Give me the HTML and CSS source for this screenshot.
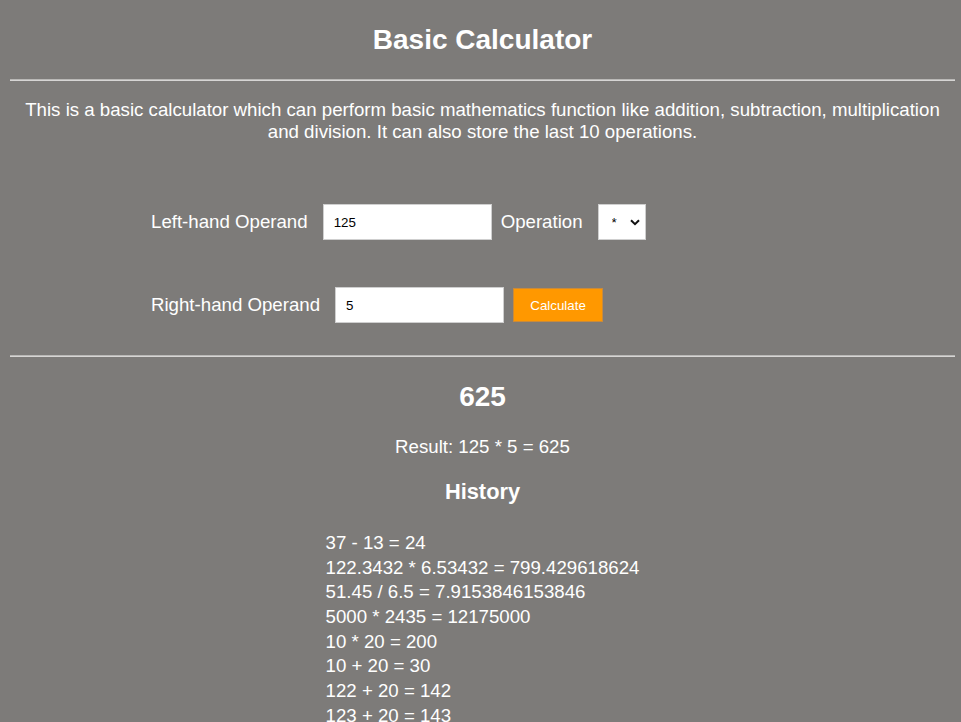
FILE: index.html
```html
<!DOCTYPE html>
<html>
<head>
<meta charset="utf-8">
<title>Basic Calculator</title>
<link rel="stylesheet" href="styles.css">
</head>
<body>
<h1 class="title">Basic Calculator</h1>
<hr class="rule">
<p class="intro">This is a basic calculator which can perform basic mathematics function like addition, subtraction, multiplication and division. It can also store the last 10 operations.</p>
<form class="calc">
  <div class="row row-first">
    <label class="lbl lbl-left">Left-hand Operand</label>
    <input class="field" type="text" value="125">
    <label class="lbl lbl-op">Operation</label>
    <span class="select-wrap">
      <select class="op"><option>*</option></select>
      <svg class="chev" width="10" height="7" viewBox="0 0 10 7"><path d="M1 1.2 L5 5.2 L9 1.2" fill="none" stroke="#111" stroke-width="2"/></svg>
    </span>
  </div>
  <div class="row row-second">
    <label class="lbl lbl-right">Right-hand Operand</label>
    <input class="field" type="text" value="5">
    <button class="btn" type="button">Calculate</button>
  </div>
</form>
<hr class="rule">
<div class="output">
  <h2 class="answer">625</h2>
  <p class="result">Result: 125 * 5 = 625</p>
  <h3 class="hist-title">History</h3>
  <ul class="history">
    <li>37 - 13 = 24</li>
    <li>122.3432 * 6.53432 = 799.429618624</li>
    <li>51.45 / 6.5 = 7.9153846153846</li>
    <li>5000 * 2435 = 12175000</li>
    <li>10 * 20 = 200</li>
    <li>10 + 20 = 30</li>
    <li>122 + 20 = 142</li>
    <li>123 + 20 = 143</li>
    <li>124 + 20 = 144</li>
    <li>125 + 20 = 145</li>
  </ul>
</div>
</body>
</html>
```

FILE: styles.css
```css
html, body {
  background: #7d7b79;
}
body {
  margin: 8px 6px 8px 10px;
  color: #ffffff;
  font-family: "Liberation Sans", Arial, sans-serif;
  font-size: 18.67px;
}
.title {
  font-size: 28px;
  line-height: 32px;
  font-weight: bold;
  text-align: center;
  margin: 16px 0 23px;
}
.rule {
  margin: 0;
  height: 0;
  border: 0;
  border-top: 1px solid #b9b8b6;
  border-bottom: 1px solid #d6d5d4;
}
.intro {
  text-align: center;
  line-height: 22px;
  margin: 18px 0 61px;
}
.calc {
  width: 663px;
  margin: 0 auto;
}
.row {
  display: flex;
  align-items: center;
}
.row-second {
  margin-top: 47px;
  margin-bottom: 32px;
}
.lbl {
  line-height: 22px;
}
.lbl-left { margin-right: 15px; }
.lbl-right { margin-right: 15px; }
.lbl-op { margin: 0 15px 0 9px; }
.field {
  box-sizing: border-box;
  width: 169px;
  height: 36px;
  border: 1px solid #cfcfcf;
  background: #fff;
  padding: 0 10px;
  font-family: "Liberation Sans", Arial, sans-serif;
  font-size: 13.33px;
  color: #000;
  outline: none;
}
.select-wrap {
  position: relative;
  display: inline-block;
}
.op {
  -webkit-appearance: none;
  appearance: none;
  box-sizing: border-box;
  width: 48px;
  height: 36px;
  border: 1px solid #cfcfcf;
  background: #fff;
  padding: 0 0 0 13px;
  font-family: "Liberation Sans", Arial, sans-serif;
  font-size: 13.33px;
  color: #000;
  border-radius: 0;
  display: block;
}
.chev {
  position: absolute;
  right: 6px;
  top: 15px;
}
.btn {
  box-sizing: border-box;
  margin-left: 9px;
  width: 90px;
  height: 34px;
  background: #ff9800;
  border: 1px solid #c98a3a;
  color: #fff;
  font-family: "Liberation Sans", Arial, sans-serif;
  font-size: 13.33px;
  padding: 0;
}
.output {
  text-align: center;
}
.answer {
  font-size: 28px;
  line-height: 32px;
  margin: 24px 0 23px;
}
.result {
  line-height: 22px;
  margin: 0 0 21px;
}
.hist-title {
  font-size: 21.84px;
  line-height: 25px;
  margin: 0 0 27px;
}
.history {
  display: inline-block;
  text-align: left;
  list-style: none;
  margin: 0;
  padding: 0;
}
.history li {
  line-height: 24.67px;
}
```
